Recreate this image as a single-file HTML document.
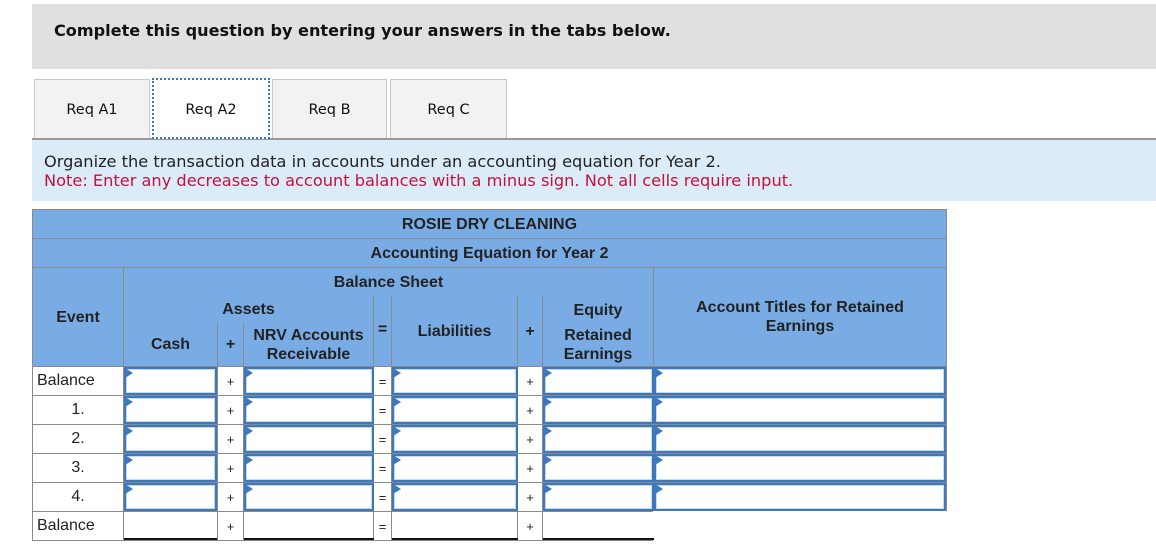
<!DOCTYPE html>
<html><head><meta charset="utf-8"><style>
*{box-sizing:border-box;margin:0;padding:0}
body{width:1156px;height:548px;background:#fff;font-family:"Liberation Sans",Arial,sans-serif;position:relative;overflow:hidden;color:#222}
.a{position:absolute}
.hd{background:#e0e0e0;left:32px;top:4px;width:1124px;height:65px}
.hd span{position:absolute;left:22px;top:17px;font-family:"DejaVu Sans",sans-serif;font-weight:bold;font-size:16.1px;color:#111}
.tab{position:absolute;top:79px;height:59px;background:#f2f2f2;border:1px solid #c8c8c8;border-bottom:none;font-family:"DejaVu Sans",sans-serif;font-size:14.5px;text-align:center;line-height:60px;color:#111}
.ins{left:32px;top:139px;width:1124px;height:62px;background:#dcebf8;border-top:1px solid #999;font-family:"DejaVu Sans",sans-serif;font-size:16.2px}
.c{position:absolute;background:#79ace4;border:1px solid #8a8a8a;font-weight:bold;font-size:16px;color:#222;display:flex;align-items:center;justify-content:center;text-align:center;line-height:19px}
.d{position:absolute;background:#fff;border:1px solid #8a8a8a;font-size:16px;display:flex;align-items:center;justify-content:center}
.in{position:absolute;background:#fff;border:2px solid #3d78bd;box-shadow:inset 0 0 0 1px #c5d9ef}
.in:before{content:"";position:absolute;left:-1px;top:-1px;border-left:8px solid #3d78bd;border-top:5px solid transparent;border-bottom:5px solid transparent}
</style></head><body>
<div class="a hd"><span>Complete this question by entering your answers in the tabs below.</span></div>
<div class="a" style="left:32px;top:138px;width:1124px;height:1px;background:#999"></div>
<div class="tab" style="left:34px;width:116px">Req A1</div>
<div class="tab" style="left:152px;top:78px;width:118px;height:61px;background:#fff;border:2px dotted #3d78bd;line-height:60px">Req A2</div>
<div class="tab" style="left:272px;width:115px">Req B</div>
<div class="tab" style="left:390px;width:117px">Req C</div>
<div class="a ins"><div style="position:absolute;left:12px;top:12px;color:#222">Organize the transaction data in accounts under an accounting equation for Year 2.</div><div style="position:absolute;left:12px;top:31px;color:#c0143c">Note: Enter any decreases to account balances with a minus sign. Not all cells require input.</div></div>

<div class="c" style="left:32px;top:209px;width:915px;height:30px">ROSIE DRY CLEANING</div>
<div class="c" style="left:32px;top:238px;width:915px;height:30px">Accounting Equation for Year 2</div>
<div class="c" style="left:32px;top:267px;width:92px;height:100px">Event</div>
<div class="c" style="left:123px;top:267px;width:531px;height:30px;border-bottom:1px solid #111">Balance Sheet</div>
<div class="c" style="left:653px;top:267px;width:294px;height:100px;align-items:flex-start;padding-top:30px">Account Titles for Retained<br>Earnings</div>
<div class="c" style="left:123px;top:296px;width:251px;height:28px;border-top:none;border-bottom:1px solid #111">Assets</div>
<div class="c" style="left:123px;top:323px;width:95px;height:44px;border-top:none">Cash</div>
<div class="c" style="left:217px;top:323px;width:27px;height:44px;border-top:none">+</div>
<div class="c" style="left:243px;top:323px;width:131px;height:44px;border-top:none">NRV Accounts<br>Receivable</div>
<div class="c" style="left:373px;top:296px;width:19px;height:71px;border-top:none;align-items:flex-start;padding-top:24px">=</div>
<div class="c" style="left:391px;top:296px;width:127px;height:71px;border-top:none">Liabilities</div>
<div class="c" style="left:517px;top:296px;width:26px;height:71px;border-top:none">+</div>
<div class="c" style="left:542px;top:296px;width:112px;height:29px;border-top:none;border-bottom:1px solid #111">Equity</div>
<div class="c" style="left:542px;top:324px;width:112px;height:43px;border-top:none">Retained<br>Earnings</div>

<div id="rows"></div>
<script>
var labels=["Balance","1.","2.","3.","4.","Balance"],h="";
for(var i=0;i<6;i++){var y=366+i*29;
var al=(i==0||i==5)?"justify-content:flex-start;padding-left:4px":"";
h+='<div class="d" style="left:32px;top:'+y+'px;width:92px;height:30px;'+al+'">'+labels[i]+'</div>';
h+='<div class="d" style="left:123px;top:'+y+'px;width:95px;height:30px"></div>';
h+='<div class="d" style="left:217px;top:'+y+'px;width:27px;height:30px;font-size:13px">+</div>';
h+='<div class="d" style="left:243px;top:'+y+'px;width:131px;height:30px"></div>';
h+='<div class="d" style="left:373px;top:'+y+'px;width:19px;height:30px;font-size:13px">=</div>';
h+='<div class="d" style="left:391px;top:'+y+'px;width:127px;height:30px"></div>';
h+='<div class="d" style="left:517px;top:'+y+'px;width:26px;height:30px;font-size:13px">+</div>';
h+='<div class="d" style="left:542px;top:'+y+'px;width:112px;height:30px"></div>';
h+='<div class="d" style="left:653px;top:'+y+'px;width:294px;height:30px;'+(i==5?'border:none;':'')+'"></div>';
if(i<5){
[[124,93],[244,130],[392,126],[543,111],[654,292]].forEach(function(p){h+='<div class="in" style="left:'+p[0]+'px;top:'+(y+1)+'px;width:'+p[1]+'px;height:28px"></div>';});
}else{
[[124,93],[244,130],[392,126],[543,111]].forEach(function(p){h+='<div class="a" style="left:'+p[0]+'px;top:'+(y+27)+'px;width:'+p[1]+'px;height:2px;background:#111"></div>';});
}}
document.getElementById("rows").innerHTML=h;
</script>
</body></html>
